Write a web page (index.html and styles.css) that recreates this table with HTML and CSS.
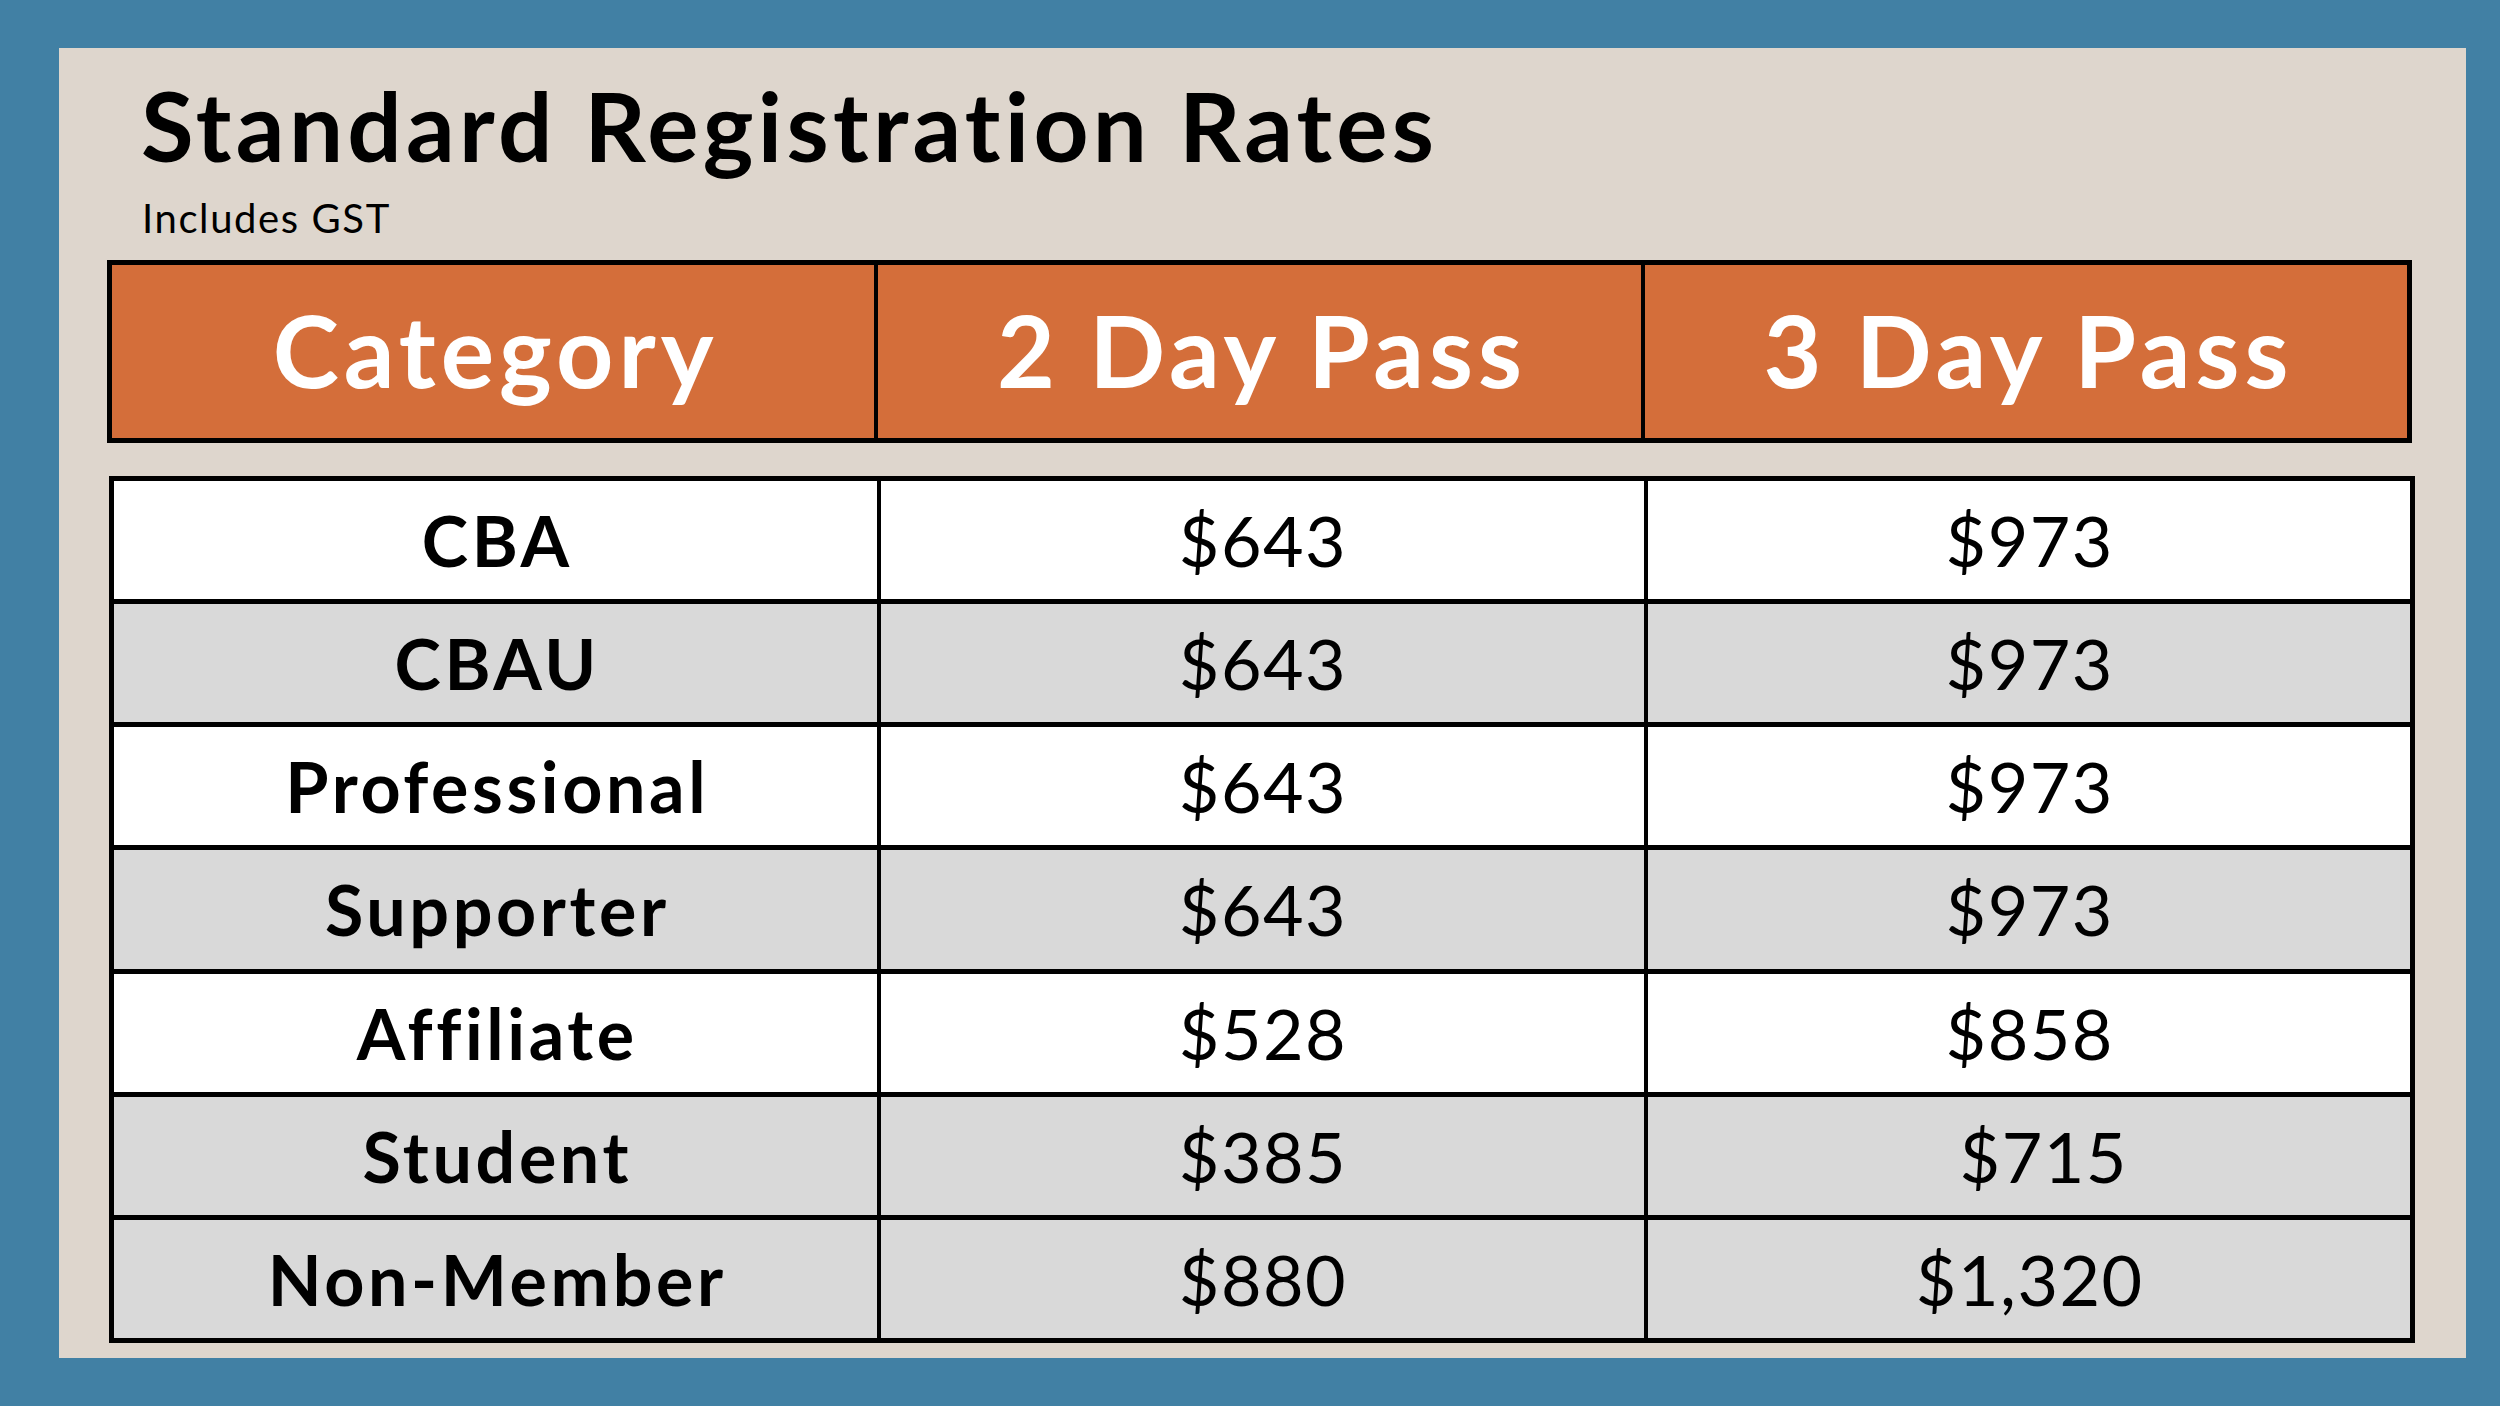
FILE: index.html
```html
<!DOCTYPE html>
<html lang="en">
<head>
<meta charset="utf-8">
<title>Standard Registration Rates</title>
<link rel="stylesheet" href="styles.css">
</head>
<body>
<main class="panel">
  <h1 class="title">Standard Registration Rates</h1>
  <p class="subtitle">Includes GST</p>
  <table class="head">
    <tr>
      <th>Category</th>
      <th>2 Day Pass</th>
      <th>3 Day Pass</th>
    </tr>
  </table>
  <table class="rates">
    <tr class="white"><td class="cat">CBA</td><td>$643</td><td>$973</td></tr>
    <tr class="grey"><td class="cat">CBAU</td><td>$643</td><td>$973</td></tr>
    <tr class="white"><td class="cat">Professional</td><td>$643</td><td>$973</td></tr>
    <tr class="grey"><td class="cat">Supporter</td><td>$643</td><td>$973</td></tr>
    <tr class="white"><td class="cat">Affiliate</td><td>$528</td><td>$858</td></tr>
    <tr class="grey"><td class="cat">Student</td><td>$385</td><td class="nudge">$715</td></tr>
    <tr class="grey"><td class="cat">Non-Member</td><td>$880</td><td>$1,320</td></tr>
  </table>
</main>
</body>
</html>
```

FILE: styles.css
```css
html, body {
  margin: 0;
  padding: 0;
}
body {
  background: #4180a4;
  width: 2500px;
  height: 1406px;
  box-sizing: border-box;
  padding: 48px 34px 48px 59px;
  font-family: "Lato", "Inter", sans-serif;
  font-variant-ligatures: none;
  color: #000;
}
.panel {
  background: #ded6cd;
  height: 1310px;
  box-sizing: border-box;
  padding: 29px 51px 0 48px;
  display: flex;
  flex-direction: column;
}
.title {
  margin: 0 0 0 34px;
  font-size: 96px;
  line-height: 96px;
  font-weight: 700;
  letter-spacing: 4.3px;
}
.subtitle {
  margin: 25px 0 0 35px;
  font-size: 40px;
  line-height: 40px;
  font-weight: 400;
  letter-spacing: 1.6px;
}
.head {
  margin-top: 22px;
  width: 2305px;
  height: 183px;
  border-collapse: collapse;
  table-layout: fixed;
  border: 5px solid #000;
  background: #d46e3a;
}
.head th {
  border-left: 4px solid #000;
  border-right: 4px solid #000;
  color: #fff;
  font-size: 100px;
  font-weight: 700;
  letter-spacing: 5px;
  text-align: center;
  vertical-align: middle;
  padding: 0 0 6px 5px;
}
.rates {
  margin-top: 33px;
  margin-left: 2px;
  width: 2306px;
  height: 867px;
  border-collapse: collapse;
  table-layout: fixed;
  border: 5px solid #000;
}
.rates td {
  border-top: 5px solid #000;
  border-bottom: 5px solid #000;
  border-left: 4px solid #000;
  border-right: 4px solid #000;
  text-align: center;
  vertical-align: middle;
  font-size: 70px;
  font-weight: 400;
  letter-spacing: 1.5px;
  padding: 0 0 0 2px;
}
.rates td.cat {
  font-weight: 700;
  letter-spacing: 3.6px;
  padding-left: 4px;
}
.rates td.nudge {
  padding-left: 30px;
}
.white td {
  background: #ffffff;
}
.grey td {
  background: #d9d9d9;
}
```
